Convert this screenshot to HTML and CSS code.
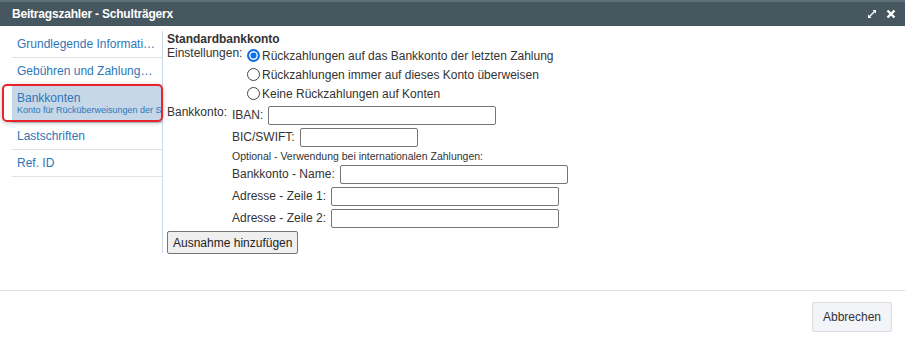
FILE: index.html
```html
<!DOCTYPE html>
<html lang="de">
<head>
    <meta charset="UTF-8">
    <title>Beitragszahler - Schulträgerx</title>
    <link rel="stylesheet" href="styles.css">
</head>
<body>
    <div class="dialogo">
        <!-- Titelleiste -->
        <div class="titel">
            <span class="titel-text">Beitragszahler - Schulträgerx</span>
            <span class="titel-icons">
                <svg width="10" height="10" viewBox="0 0 10 10"><path d="M5.5 1h3.5v3.5L7.7 3.2 3.2 7.7 4.5 9H1V5.5l1.3 1.3 4.5-4.5z" fill="#fff"/></svg>
                <svg width="10" height="10" viewBox="0 0 10 10"><path d="M1.5 1.5l7 7M8.5 1.5l-7 7" stroke="#fff" stroke-width="2.4"/></svg>
            </span>
        </div>

        <div class="inhalt">
            <!-- Navigation -->
            <ul class="nav">
                <li class="nav-item">Grundlegende Informati…</li>
                <li class="nav-item">Gebühren und Zahlung…</li>
                <li class="nav-item aktiv">
                    <span>Bankkonten</span>
                    <small>Konto für Rücküberweisungen der S</small>
                </li>
                <li class="nav-item">Lastschriften</li>
                <li class="nav-item">Ref. ID</li>
            </ul>

            <!-- Formular -->
            <div class="formular">
                <div class="ueberschrift">Standardbankkonto</div>

                <div class="zeile">
                    <span class="label lbl-einst">Einstellungen:</span>
                    <div class="radios">
                        <label class="radio"><span class="kreis an"></span>Rückzahlungen auf das Bankkonto der letzten Zahlung</label>
                        <label class="radio"><span class="kreis"></span>Rückzahlungen immer auf dieses Konto überweisen</label>
                        <label class="radio"><span class="kreis"></span>Keine Rückzahlungen auf Konten</label>
                    </div>
                </div>

                <div class="zeile">
                    <span class="label lbl-konto">Bankkonto:</span>
                    <div class="felder">
                        <div class="feld"><span>IBAN:</span><span class="eingabe breit"></span></div>
                        <div class="feld"><span>BIC/SWIFT:</span><span class="eingabe schmal"></span></div>
                        <div class="hinweis">Optional - Verwendung bei internationalen Zahlungen:</div>
                        <div class="feld"><span>Bankkonto - Name:</span><span class="eingabe breit"></span></div>
                        <div class="feld"><span>Adresse - Zeile 1:</span><span class="eingabe breit"></span></div>
                        <div class="feld"><span>Adresse - Zeile 2:</span><span class="eingabe breit"></span></div>
                    </div>
                </div>

                <button class="btn-ausnahme">Ausnahme hinzufügen</button>
            </div>
        </div>

        <div class="fuss">
            <button class="btn-abbrechen">Abbrechen</button>
        </div>
    </div>
</body>
</html>
```

FILE: styles.css
```css
* {
    margin: 0;
    padding: 0;
    box-sizing: border-box;
}

body {
    font-family: "Liberation Sans", Arial, sans-serif;
    font-size: 12px;
    color: #333;
    background: #fff;
    width: 905px;
    height: 339px;
    overflow: hidden;
}

.dialogo {
    display: flex;
    flex-direction: column;
    height: 339px;
}

/* Titelleiste */
.titel {
    height: 26px;
    background: #46575f;
    border-top: 2px solid #5d6e77;
    display: flex;
    align-items: center;
    justify-content: space-between;
    padding: 0 9px 0 12px;
    color: #fff;
}

.titel-text {
    font-family: "Liberation Sans Narrow", "Liberation Sans", sans-serif;
    font-weight: bold;
    font-size: 12px;
    letter-spacing: -0.2px;
}

.titel-icons {
    display: flex;
    gap: 9px;
    align-items: center;
}

/* Inhalt */
.inhalt {
    display: flex;
    height: 265px;
    padding: 5px 0 0 12px;
    border-bottom: 1px solid #dddddd;
}

.nav {
    list-style: none;
    width: 151px;
    border-right: 1px solid #c9d9ea;
    height: 222px;
}

.nav-item {
    height: 27px;
    line-height: 26px;
    padding: 0 5px;
    color: #2e76b8;
    border-bottom: 1px solid #dde3ea;
    white-space: nowrap;
    overflow: hidden;
}

.nav-item.aktiv {
    position: relative;
    height: 38px;
    line-height: 14px;
    padding-top: 6px;
    background: #c6d7e7;
    border-bottom: 1px solid #c6d7e7;
    overflow: visible;
}

.nav-item.aktiv span {
    display: block;
    font-size: 12px;
}

.nav-item.aktiv small {
    display: block;
    font-size: 9px;
    line-height: 11px;
    white-space: nowrap;
}

.nav-item.aktiv::after {
    content: "";
    position: absolute;
    left: -10px;
    top: -1px;
    right: -1px;
    bottom: 0;
    border: 2px solid #e8232b;
    border-radius: 5px;
    box-shadow: 0 1px 4px rgba(0, 0, 0, 0.25);
}

/* Formular */
.formular {
    padding: 1px 0 0 4px;
    display: flex;
    flex-direction: column;
    align-items: flex-start;
}

.ueberschrift {
    font-weight: bold;
    font-size: 12px;
    line-height: 14px;
}

.zeile {
    display: flex;
}

.label {
    line-height: 14px;
}

.lbl-einst {
    width: 80px;
}

.lbl-konto {
    width: 65px;
    padding-top: 2px;
}

.radios {
    display: flex;
    flex-direction: column;
}

.radio {
    display: flex;
    align-items: center;
    height: 19px;
    font-size: 12px;
}

.kreis {
    width: 13px;
    height: 13px;
    border: 1px solid #444;
    border-radius: 50%;
    margin-right: 2px;
    background: #fff;
}

.kreis.an {
    border: 2px solid #0f6fe8;
    box-shadow: inset 0 0 0 1.5px #fff;
    background: #0f6fe8;
}

.felder {
    display: flex;
    flex-direction: column;
    padding-top: 1px;
}

.feld {
    display: flex;
    align-items: center;
    gap: 5px;
    height: 22px;
}

.eingabe {
    display: block;
    height: 19px;
    border: 1px solid #767676;
    border-radius: 2px;
    background: #fff;
}

.eingabe.breit {
    width: 228px;
}

.eingabe.schmal {
    width: 118px;
}

.hinweis {
    font-size: 10.5px;
    line-height: 13px;
    padding-top: 2px;
    height: 15px;
}

.btn-ausnahme {
    margin-top: 2px;
    height: 23px;
    padding: 0 5px;
    font-family: "Liberation Sans", Arial, sans-serif;
    font-size: 12px;
    color: #222;
    background: #efefef;
    border: 1px solid #767676;
    border-radius: 2px;
}

/* Fuss */
.fuss {
    display: flex;
    justify-content: flex-end;
    padding: 11px 13px 0 0;
}

.btn-abbrechen {
    width: 80px;
    height: 30px;
    font-family: "Liberation Sans", Arial, sans-serif;
    font-size: 12px;
    color: #333;
    background: #f3f4f8;
    border: 1px solid #dcdde2;
    border-radius: 2px;
}
```
